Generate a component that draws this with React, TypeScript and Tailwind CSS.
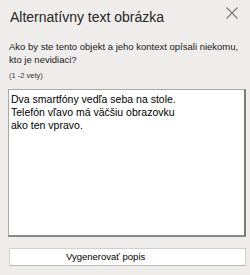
export default function App() {
  return (
    <div
      className="w-[250px] h-[275px] bg-[#eeedeb] flex flex-col overflow-hidden"
      style={{ fontFamily: '"Liberation Sans", Arial, sans-serif' }}
    >
      <div className="flex items-start justify-between pl-[10px] pr-[12px] pt-[9px]">
        <h1 className="text-[14px] leading-[16px] font-normal text-[#262626]">
          Alternatívny text obrázka
        </h1>
        <svg width="12" height="12" viewBox="0 0 12 12" className="mt-[-2px]">
          <path d="M0.5 0.5 L11.5 11.5 M11.5 0.5 L0.5 11.5" stroke="#7a7a7a" strokeWidth="1.1" />
        </svg>
      </div>

      <p className="mt-[15px] px-[9px] text-[9.5px] leading-[13px] text-[#1a1a1a]">
        Ako by ste tento objekt a jeho kontext opísali niekomu,
        <br />
        kto je nevidiaci?
      </p>
      <p className="mt-[5px] px-[9px] text-[7.5px] leading-[10px] text-[#333]">(1 -2 vety)</p>

      <div className="mt-[8px] ml-[8px] mr-[4px] h-[148px] bg-white border-l border-t border-[#a8a8a8] border-r-2 border-b-2 border-r-[#7c7c7c] border-b-[#8a8a8a] px-[2px] pt-[3px]">
        <div className="text-[10.5px] leading-[13px] text-black whitespace-pre-line">
          {'Dva smartfóny vedľa seba na stole.\nTelefón vľavo má väčšiu obrazovku\nako ten vpravo.'}
        </div>
      </div>

      <div className="mt-[11px] ml-[9px] mr-[4px] h-[18px] bg-white border border-[#d0d0d0] border-b-[#b8b8b8] flex items-center pl-[56px]">
        <span className="text-[9.5px] leading-[12px] text-black">Vygenerovať popis</span>
      </div>
    </div>
  );
}
